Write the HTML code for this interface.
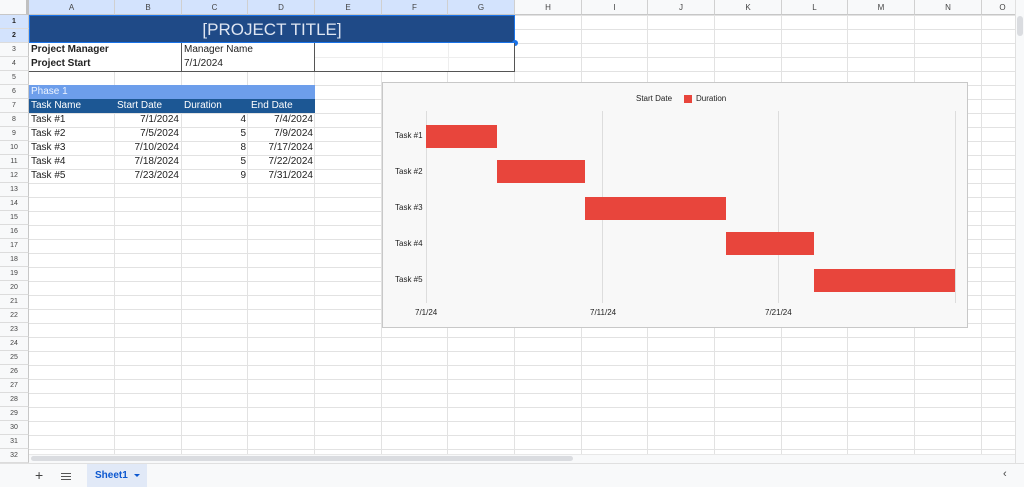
<!DOCTYPE html>
<html><head><style>
*{margin:0;padding:0;box-sizing:border-box}
body{width:1024px;height:487px;overflow:hidden;background:#fff;font-family:"Liberation Sans",sans-serif;position:relative}
.a{position:absolute}
.grid{left:29px;top:15px;width:995px;height:448px;
background-image:linear-gradient(to bottom,#e2e2e2 1px,transparent 1px);
background-size:100% 14px}
.vl{top:15px;width:1px;height:440px;background:#e2e2e2}
.colh{top:0;height:15px;background:#f8f9fa;border-bottom:1px solid #c7c7c7;border-right:1px solid #d0d0d0;font-size:8px;color:#444;text-align:center;line-height:15px}
.rowh{left:0;width:29px;height:14px;background:#f8f9fa;border-bottom:1px solid #dcdcdc;border-right:1px solid #c7c7c7;font-size:7px;color:#444;text-align:center;line-height:14px}
.sel{background:#d3e3fd}
.t{font-size:10px;line-height:14px;color:#222;white-space:nowrap}
.r{text-align:right}
.bar{background:#e8453c;height:23px}
</style></head><body>
<div class="a grid"></div>
<div id="vls"></div>
<script>
var xs=[115,182,248,315,382,448,515,582,648,715,782,848,915,982],v='';
xs.forEach(function(x){v+='<div class="a vl" style="left:'+(x-1)+'px"></div>';});
document.getElementById('vls').innerHTML=v;
</script>
<!-- column headers -->
<div class="a colh" style="left:0;width:29px;border-right:3px solid #c0c0c0"></div>
<div class="a colh sel" style="left:29px;width:86px">A</div>
<div class="a colh sel" style="left:115px;width:67px">B</div>
<div class="a colh sel" style="left:182px;width:66px">C</div>
<div class="a colh sel" style="left:248px;width:67px">D</div>
<div class="a colh sel" style="left:315px;width:67px">E</div>
<div class="a colh sel" style="left:382px;width:66px">F</div>
<div class="a colh sel" style="left:448px;width:67px">G</div>
<div class="a colh" style="left:515px;width:67px">H</div>
<div class="a colh" style="left:582px;width:66px">I</div>
<div class="a colh" style="left:648px;width:67px">J</div>
<div class="a colh" style="left:715px;width:67px">K</div>
<div class="a colh" style="left:782px;width:66px">L</div>
<div class="a colh" style="left:848px;width:67px">M</div>
<div class="a colh" style="left:915px;width:67px">N</div>
<div class="a colh" style="left:982px;width:42px">O</div>
<div id="rows"></div>
<script>
var h='';for(var i=1;i<=32;i++){h+='<div class="a rowh'+(i<=2?' sel':'')+'" style="top:'+(15+(i-1)*14)+'px'+(i<=2?';font-weight:bold;color:#222':'')+'">'+i+'</div>';}
document.getElementById('rows').innerHTML=h;
</script>
<!-- title -->
<div class="a" style="left:29px;top:15px;width:486px;height:28px;background:#1f4a87;border:1px solid #1a73e8;color:#dfe6f2;font-size:17px;text-align:center;line-height:27px">[PROJECT TITLE]</div>
<div class="a" style="left:512px;top:40px;width:6px;height:6px;border-radius:50%;background:#1a73e8"></div>
<div class="a" style="left:29px;top:43px;width:486px;height:29px;background:#fff;border-bottom:1px solid #555;border-right:1px solid #555"></div>
<div class="a" style="left:181px;top:43px;width:1px;height:29px;background:#555"></div>
<div class="a" style="left:314px;top:43px;width:1px;height:29px;background:#555"></div>
<div class="a" style="left:382px;top:43px;width:1px;height:28px;background:#eee"></div>
<div class="a" style="left:448px;top:43px;width:1px;height:28px;background:#eee"></div>
<div class="a" style="left:315px;top:57px;width:199px;height:1px;background:#eee"></div>
<div class="a t" style="left:31px;top:43px;font-weight:bold">Project Manager</div>
<div class="a t" style="left:31px;top:57px;font-weight:bold">Project Start</div>
<div class="a t" style="left:184px;top:43px">Manager Name</div>
<div class="a t" style="left:184px;top:57px">7/1/2024</div>
<!-- phase table -->
<div class="a t" style="left:29px;top:85px;width:286px;height:14px;background:#6d9eeb;color:#eef4ff;padding-left:2px">Phase 1</div>
<div class="a" style="left:29px;top:99px;width:286px;height:14px;background:#1c5794"></div>
<div class="a t" style="left:31px;top:99px;color:#fff">Task Name</div>
<div class="a t" style="left:117px;top:99px;color:#fff">Start Date</div>
<div class="a t" style="left:184px;top:99px;color:#fff">Duration</div>
<div class="a t" style="left:251px;top:99px;color:#fff">End Date</div>
<div id="tbl"></div>
<script>
var d=[["Task #1","7/1/2024",4,"7/4/2024"],["Task #2","7/5/2024",5,"7/9/2024"],["Task #3","7/10/2024",8,"7/17/2024"],["Task #4","7/18/2024",5,"7/22/2024"],["Task #5","7/23/2024",9,"7/31/2024"]];
var s='';d.forEach(function(r,i){var y=113+i*14;
s+='<div class="a t" style="left:31px;top:'+y+'px">'+r[0]+'</div>';
s+='<div class="a t r" style="left:115px;width:64px;top:'+y+'px">'+r[1]+'</div>';
s+='<div class="a t r" style="left:182px;width:64px;top:'+y+'px">'+r[2]+'</div>';
s+='<div class="a t r" style="left:248px;width:65px;top:'+y+'px">'+r[3]+'</div>';});
document.getElementById('tbl').innerHTML=s;
</script>
<!-- chart -->
<div class="a" style="left:382px;top:82px;width:586px;height:246px;background:#f8f8f8;border:1px solid #c8c8c8"></div>
<div class="a" style="left:426px;top:111px;width:1px;height:192px;background:#ddd"></div>
<div class="a" style="left:602px;top:111px;width:1px;height:192px;background:#ddd"></div>
<div class="a" style="left:778px;top:111px;width:1px;height:192px;background:#ddd"></div>
<div class="a" style="left:955px;top:111px;width:1px;height:192px;background:#ddd"></div>
<div class="a" style="left:636px;top:94px;font-size:8px;color:#222">Start Date</div>
<div class="a" style="left:684px;top:95px;width:8px;height:8px;background:#e8453c"></div>
<div class="a" style="left:696px;top:94px;font-size:8px;color:#222">Duration</div>
<div class="a bar" style="left:426px;top:125px;width:71px"></div>
<div class="a bar" style="left:497px;top:160px;width:88px"></div>
<div class="a bar" style="left:585px;top:197px;width:141px"></div>
<div class="a bar" style="left:726px;top:232px;width:88px"></div>
<div class="a bar" style="left:814px;top:269px;width:141px"></div>
<div class="a" style="left:395px;top:131px;font-size:8px;color:#222">Task #1</div>
<div class="a" style="left:395px;top:167px;font-size:8px;color:#222">Task #2</div>
<div class="a" style="left:395px;top:203px;font-size:8px;color:#222">Task #3</div>
<div class="a" style="left:395px;top:239px;font-size:8px;color:#222">Task #4</div>
<div class="a" style="left:395px;top:275px;font-size:8px;color:#222">Task #5</div>
<div class="a" style="left:415px;top:308px;font-size:8px;color:#222">7/1/24</div>
<div class="a" style="left:590px;top:308px;font-size:8px;color:#222">7/11/24</div>
<div class="a" style="left:765px;top:308px;font-size:8px;color:#222">7/21/24</div>
<!-- right scrollbar -->
<div class="a" style="left:1015px;top:0;width:9px;height:463px;background:#f8f9fa;border-left:1px solid #e0e0e0"></div>
<div class="a" style="left:1017px;top:16px;width:6px;height:20px;background:#dadce0;border-radius:3px"></div>
<!-- horizontal scrollbar -->
<div class="a" style="left:29px;top:454px;width:986px;height:9px;background:#f8f9fa;border-top:1px solid #e8e8e8"></div>
<div class="a" style="left:31px;top:456px;width:542px;height:5px;background:#dadce0;border-radius:3px"></div>
<!-- bottom bar -->
<div class="a" style="left:0;top:463px;width:1024px;height:24px;background:#f8f9fa;border-top:1px solid #e0e0e0"></div>
<div class="a" style="left:35px;top:467px;font-size:14px;color:#444">+</div>
<div class="a" style="left:61px;top:473px;width:10px;height:1px;background:#555;box-shadow:0 3px 0 #555,0 6px 0 #555"></div>
<div class="a" style="left:87px;top:464px;width:60px;height:23px;background:#e1e9f7"></div>
<div class="a" style="left:95px;top:470px;font-size:10px;font-weight:bold;color:#0b57d0">Sheet1</div>
<div class="a" style="left:134px;top:474px;width:0;height:0;border-left:3px solid transparent;border-right:3px solid transparent;border-top:3px solid #0b57d0"></div>
<div class="a" style="left:1003px;top:468px;font-size:11px;color:#444">‹</div>
</body></html>
